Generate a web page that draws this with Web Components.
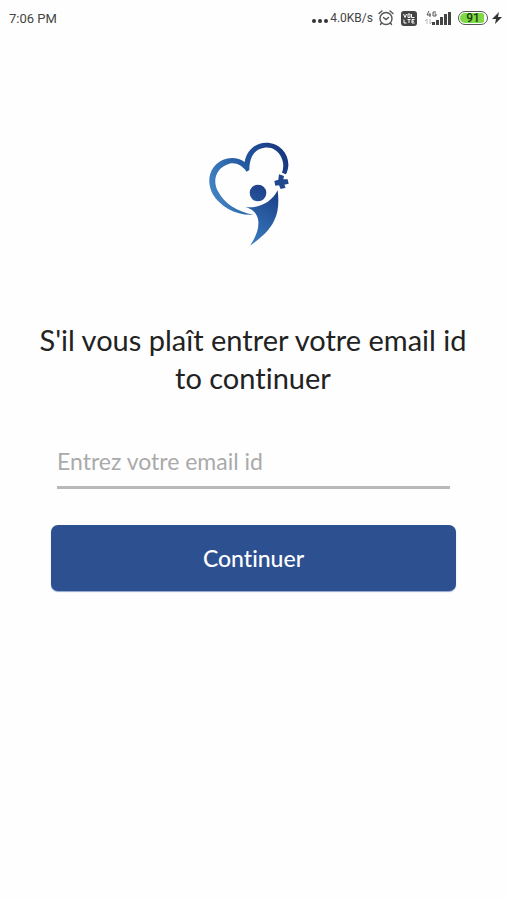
<!DOCTYPE html>
<html lang="fr">
<head>
<meta charset="utf-8">
<meta name="viewport" content="width=device-width, initial-scale=1">
<title>Continuer</title>
<style>
    body {
        margin: 0;
        min-height: 100vh;
        background: #fefefe;
        color: #222;
        font-family: Lato, "Open Sans", sans-serif;
        font-variant-ligatures: none;
    }
</style>
</head>
<body>
<login-screen></login-screen>

<script>
// Phone status bar: time on the left, indicators on the right
class StatusBar extends HTMLElement {
    constructor() {
        super();
        this.attachShadow({ mode: 'open' });
    }

    connectedCallback() {
        this.render();
    }

    render() {
        const time = this.getAttribute('time') || '';
        const speed = this.getAttribute('speed') || '';
        const battery = this.getAttribute('battery') || '';

        this.shadowRoot.innerHTML = `
            <style>
                :host {
                    display: flex;
                    justify-content: space-between;
                    align-items: center;
                    height: 36px;
                    padding: 0 4px 0 9px;
                    font-family: Roboto, sans-serif;
                    font-size: 13px;
                    color: #444;
                }
                .indicators {
                    display: flex;
                    align-items: center;
                }
                .speed {
                    font-size: 12px;
                    margin: 0 5px 0 1px;
                }
                svg {
                    display: block;
                }
                .alarm, .lte, .signal {
                    margin-right: 7px;
                }
                .battery {
                    display: flex;
                    box-sizing: border-box;
                    width: 30px;
                    height: 14px;
                    padding: 1px;
                    border: 1px solid #555;
                    border-radius: 7px;
                    margin-right: 4px;
                }
                .level {
                    flex: 1;
                    border-radius: 5px;
                    background: linear-gradient(90deg, #7ed943 92%, #fff 92%);
                    color: #1c3a12;
                    font-size: 12px;
                    font-weight: 500;
                    line-height: 10px;
                    text-align: center;
                }
            </style>

            <span>${time}</span>
            <div class="indicators">
                <svg width="18" height="16" viewBox="0 0 18 16" fill="#333">
                    <circle cx="3" cy="11" r="2"/>
                    <circle cx="9" cy="11" r="2"/>
                    <circle cx="15" cy="11" r="2"/>
                </svg>
                <span class="speed">${speed}</span>
                <svg class="alarm" width="16" height="16" viewBox="0 0 16 16" fill="none" stroke="#555" stroke-width="1.4" stroke-linecap="round">
                    <circle cx="8" cy="8.5" r="6"/>
                    <path d="M1 3.5L4 1M15 3.5L12 1M5.5 7.5L8 9.5L10.5 7.5M3.5 13L2.5 14.5M12.5 13L13.5 14.5"/>
                </svg>
                <svg class="lte" width="16" height="15" viewBox="0 0 16 15">
                    <rect width="16" height="15" rx="3" fill="#444"/>
                    <path d="M2.5 3L4 6.5L5.5 3M7 3H9V6.5H7ZM10.5 3V6.5H13.5M3 8.5V12H5.5M6.5 8.5H9.5M8 8.5V12M13.5 8.5H11V12H13.5M11 10.2H13" fill="none" stroke="#fff"/>
                </svg>
                <svg class="signal" width="27" height="16" viewBox="0 0 27 16">
                    <path d="M5 1L3 5H7M6 3V7M12 2H9V6H12V4H10.500" fill="none" stroke="#555"/>
                    <path d="M3 14V9L1 11M6 9V14L8 12" fill="none" stroke="#bbb"/>
                    <path d="M8 12H11V15H8ZM12 10H15V15H12ZM16 7H19V15H16ZM20 4H23V15H20ZM24 2H27V15H24Z" fill="#444"/>
                </svg>
                <div class="battery"><span class="level">${battery}</span></div>
                <svg width="10" height="14" viewBox="0 0 10 14" fill="#333">
                    <path d="M7 1L0 8H4L3 13L10 6H6Z"/>
                </svg>
            </div>
        `;
    }
}

// Heart outline with a figure and a small cross
class HeartLogo extends HTMLElement {
    constructor() {
        super();
        this.attachShadow({ mode: 'open' });
        this.shadowRoot.innerHTML = `
            <style>
                :host {
                    display: block;
                }
                svg {
                    display: block;
                }
            </style>

            <svg width="92" height="106" viewBox="36 36 276 318" role="img" aria-label="Logo">
                <defs>
                    <linearGradient id="line" gradientUnits="userSpaceOnUse" x1="45" y1="190" x2="280" y2="100">
                        <stop offset="0" stop-color="#4385c4"/>
                        <stop offset="0.5" stop-color="#2459a0"/>
                        <stop offset="1" stop-color="#173880"/>
                    </linearGradient>
                    <linearGradient id="body" gradientUnits="userSpaceOnUse" x1="165" y1="330" x2="250" y2="190">
                        <stop offset="0" stop-color="#3879bd"/>
                        <stop offset="1" stop-color="#1c3f87"/>
                    </linearGradient>
                </defs>
                <path fill="url(#line)" d="M176 254C126 258 76 231 53 192C29 146 49 98 94 86C114 81 134 85 149 96C154 62 181 38 213 38C254 38 282 71 280 107C279 117 277 125 273 133L261 128C267 111 266 96 258 80C248 60 229 50 208 53C180 56 163 81 163 120L155 125C142 106 122 96 103 101C65 112 50 149 69 184C86 219 128 247 176 254Z"/>
                <circle cx="189" cy="189" r="25" fill="url(#body)"/>
                <path fill="url(#body)" d="M151 231C194 236 229 217 248 181C252 213 251 246 237 273C222 304 194 326 165 347C181 323 192 299 190 274C188 251 174 238 151 231Z"/>
                <path fill="#20488e" d="M252 133L267 138L265 148L278 148L281 161L268 164L272 173L257 177L252 166L241 167L238 153L250 149Z"/>
            </svg>
        `;
    }
}

class TextField extends HTMLElement {
    constructor() {
        super();
        this.attachShadow({ mode: 'open' });
    }

    connectedCallback() {
        const label = this.getAttribute('label') || '';

        this.shadowRoot.innerHTML = `
            <style>
                :host {
                    display: block;
                }
                input {
                    display: block;
                    box-sizing: border-box;
                    width: 100%;
                    height: 54px;
                    padding: 0;
                    border: none;
                    border-bottom: 3px solid #b9b9b9;
                    border-radius: 0;
                    outline: none;
                    background: none;
                    color: #222;
                    font: inherit;
                    font-size: 23px;
                }
                input::placeholder {
                    color: #aaa;
                    opacity: 1;
                }
                input:focus {
                    border-color: #2d5190;
                }
            </style>

            <input type="email" placeholder="${label}" aria-label="${label}">
        `;
    }
}

class PrimaryButton extends HTMLElement {
    constructor() {
        super();
        this.attachShadow({ mode: 'open' });
        this.shadowRoot.innerHTML = `
            <style>
                :host {
                    display: block;
                }
                button {
                    display: block;
                    width: 100%;
                    height: 66px;
                    padding: 0 16px;
                    border: none;
                    border-radius: 7px;
                    background: #2d5190;
                    box-shadow: 0 1px 1px #8fa3c8;
                    color: #fff;
                    font: inherit;
                    font-size: 23px;
                    font-weight: 500;
                    cursor: pointer;
                }
            </style>

            <button type="button"><slot></slot></button>
        `;
    }
}

class LoginScreen extends HTMLElement {
    constructor() {
        super();
        this.attachShadow({ mode: 'open' });
    }

    connectedCallback() {
        this.render();
    }

    render() {
        this.shadowRoot.innerHTML = `
            <style>
                :host {
                    display: block;
                }
                main {
                    display: flex;
                    flex-direction: column;
                    align-items: center;
                    padding: 106px 32px 32px;
                }
                h1 {
                    margin: 73px 0 0;
                    font-size: 29px;
                    font-weight: 400;
                    line-height: 38px;
                    text-align: center;
                }
                form {
                    display: flex;
                    flex-direction: column;
                    gap: 36px;
                    box-sizing: border-box;
                    width: 100%;
                    margin-top: 38px;
                    padding: 0 18px 0 19px;
                }
                text-field {
                    margin: 0 6px;
                }
            </style>

            <status-bar time="7:06 PM" speed="4.0KB/s" battery="91"></status-bar>
            <main>
                <heart-logo></heart-logo>
                <h1>S'il vous plaît entrer votre email id<br>to continuer</h1>
                <form>
                    <text-field label="Entrez votre email id"></text-field>
                    <primary-button>Continuer</primary-button>
                </form>
            </main>
        `;
    }
}

customElements.define('status-bar', StatusBar);
customElements.define('heart-logo', HeartLogo);
customElements.define('text-field', TextField);
customElements.define('primary-button', PrimaryButton);
customElements.define('login-screen', LoginScreen);
</script>
</body>
</html>
